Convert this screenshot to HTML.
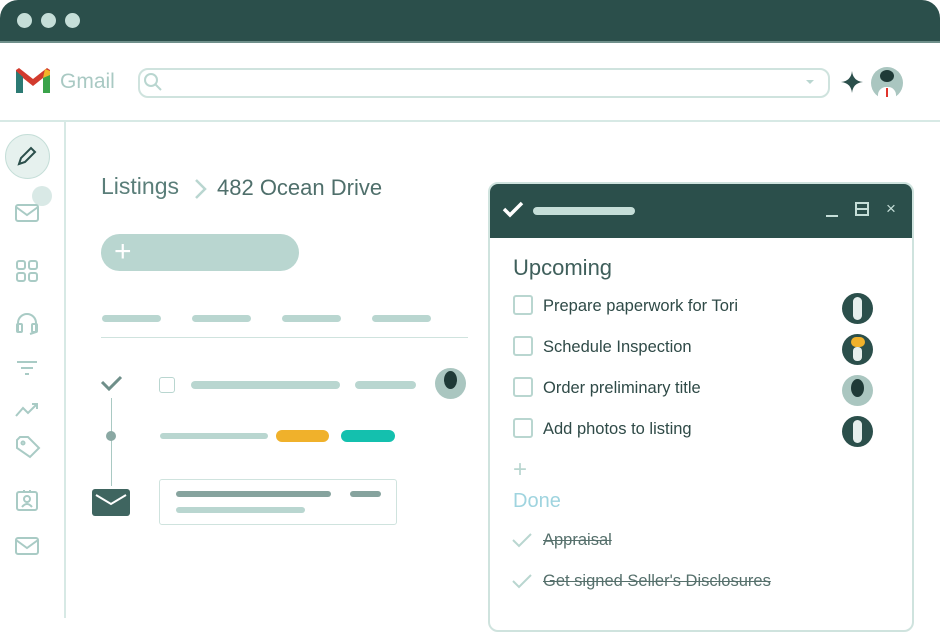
<!DOCTYPE html><html><head><style>
body{margin:0;width:940px;height:618px;background:#fff;position:relative;overflow:hidden;font-family:"Liberation Sans",sans-serif}
.a{position:absolute}
.bar{position:absolute;border-radius:5px;background:#b9d6d0;height:7px}
.cb{display:inline-block;width:20px;height:20px;border:2px solid #b9d6d0;border-radius:3px;box-sizing:border-box;vertical-align:middle;margin-right:10px;position:relative;top:-2px}
</style></head><body>
<div class="a" style="left:0;top:0;width:940px;height:43px;background:#2b4f4b;border-radius:18px 18px 0 0"></div>
<div class="a" style="left:0;top:41px;width:940px;height:2px;background:#6f8f8a"></div>
<div class="a" style="left:17px;top:13px;width:15px;height:15px;border-radius:50%;background:#c5ded8"></div>
<div class="a" style="left:41px;top:13px;width:15px;height:15px;border-radius:50%;background:#c5ded8"></div>
<div class="a" style="left:65px;top:13px;width:15px;height:15px;border-radius:50%;background:#c5ded8"></div>
<svg class="a" style="left:15px;top:67px" width="36" height="28" viewBox="0 0 36 28"><path d="M1 3v23h7V11l10 8 10-8v15h7V3l-3-2-14 11L4 1z" fill="#d23b2e"/><path d="M1 4v22h7V10z" fill="#2c7a73"/><path d="M28 10v16h7V4z" fill="#3aa34a"/><path d="M30 2l5 2v4l-7 3z" fill="#f2b42a"/></svg>
<div class="a" style="left:60px;top:70px;font-size:21px;color:#a9c9c3">Gmail</div>
<div class="a" style="left:138px;top:68px;width:688px;height:26px;border:2px solid #cfe3de;border-radius:10px"></div>
<svg class="a" style="left:142px;top:71px" width="22" height="22"><circle cx="9" cy="9" r="6" fill="none" stroke="#b9d6d0" stroke-width="2"/><path d="M13 13l6 6" stroke="#b9d6d0" stroke-width="2"/></svg>
<div class="a" style="left:806px;top:80px;border:4px solid transparent;border-top:4px solid #b9d6d0"></div>
<svg class="a" style="left:841px;top:71px" width="22" height="22"><path d="M11 0Q12 10 22 11Q12 12 11 22Q10 12 0 11Q10 10 11 0z" fill="#2b4f4b"/></svg>
<div class="a" style="left:871px;top:67px;width:32px;height:32px;border-radius:50%;background:#aac6c0"></div>
<div class="a" style="left:880px;top:70px;width:14px;height:12px;border-radius:50%;background:#1f3a37"></div>
<div class="a" style="left:878px;top:87px;width:18px;height:12px;background:#fff;border-radius:8px 8px 0 0"></div>
<div class="a" style="left:886px;top:88px;width:2px;height:9px;background:#e0342c"></div>
<div class="a" style="left:0;top:120px;width:940px;height:2px;background:#d7e9e5"></div>
<div class="a" style="left:64px;top:122px;width:2px;height:496px;background:#d7e9e5"></div>
<div class="a" style="left:5px;top:134px;width:43px;height:43px;border-radius:50%;background:#e6f1ee;border:1px solid #c5ded8"></div>
<svg class="a" style="left:15px;top:144px" width="24" height="24"><path d="M4 20l2-6L16 4l4 4-10 10z" fill="none" stroke="#2b4f4b" stroke-width="2"/></svg>
<div class="a" style="left:32px;top:186px;width:20px;height:20px;border-radius:50%;background:#d9e9e6"></div>
<svg class="a" style="left:14px;top:200px" width="28" height="380" fill="none" stroke="#a9cbc5" stroke-width="2">
<rect x="2" y="5" width="22" height="16" rx="2"/><path d="M2 7l11 8 11-8"/>
<rect x="3" y="61" width="8" height="8" rx="2"/><rect x="15" y="61" width="8" height="8" rx="2"/><rect x="3" y="73" width="8" height="8" rx="2"/><rect x="15" y="73" width="8" height="8" rx="2"/>
<path d="M4 131v-8a9 9 0 0118 0v8"/><rect x="3" y="124" width="5" height="8" rx="1"/><rect x="18" y="124" width="5" height="8" rx="1"/><path d="M22 132l-6 2"/>
<path d="M3 162h20M7 168h12M11 174h4"/>
<path d="M2 216l7-8 5 5 9-9M18 204h5v5"/>
<path d="M3 248v-8l3-3h8l11 11-9 9z"/><circle cx="9" cy="243" r="1.5"/>
<rect x="3" y="292" width="20" height="18" rx="2"/><circle cx="13" cy="299" r="3"/><path d="M8 307q5-6 10 0M10 290v3M16 290v3"/>
<rect x="2" y="338" width="22" height="16" rx="2"/><path d="M2 340l11 8 11-8"/>
</svg>
<div class="a" style="left:101px;top:173px;font-size:23px;color:#5a7e79">Listings</div>
<svg class="a" style="left:194px;top:178px" width="14" height="22"><path d="M2 2l9 9-9 9" fill="none" stroke="#b9d6d0" stroke-width="2.5"/></svg>
<div class="a" style="left:217px;top:175px;font-size:22px;color:#4f6f6b">482 Ocean Drive</div>
<div class="a" style="left:101px;top:234px;width:198px;height:37px;border-radius:19px;background:#b9d6d0"></div>
<div class="a" style="left:114px;top:237px;font-size:30px;color:#fff;line-height:30px">+</div>
<div class="bar" style="left:102px;top:315px;width:59px"></div><div class="bar" style="left:192px;top:315px;width:59px"></div><div class="bar" style="left:282px;top:315px;width:59px"></div><div class="bar" style="left:372px;top:315px;width:59px"></div>
<div class="a" style="left:101px;top:337px;width:367px;height:1px;background:#cfe3de"></div>
<svg class="a" style="left:100px;top:374px" width="24" height="20"><path d="M2 8l7 7 12-12" fill="none" stroke="#6f8f8a" stroke-width="3"/></svg>
<div class="a" style="left:111px;top:398px;width:1px;height:88px;background:#a9c9c3"></div>
<div class="a" style="left:106px;top:431px;width:10px;height:10px;border-radius:50%;background:#8aa8a3"></div>
<div class="a" style="left:92px;top:489px;width:38px;height:27px;border-radius:3px;background:#3f6560"></div>
<svg class="a" style="left:92px;top:489px" width="38" height="27"><path d="M4 6l15 9 15-9" fill="none" stroke="#fff" stroke-width="2"/></svg>
<div class="a" style="left:159px;top:377px;width:14px;height:14px;border:1.5px solid #b9d6d0;border-radius:3px"></div>
<div class="bar" style="left:191px;top:381px;width:149px;height:8px"></div>
<div class="bar" style="left:355px;top:381px;width:61px;height:8px"></div>
<div class="a" style="left:435px;top:368px;width:31px;height:31px;border-radius:50%;background:#aac6c0"></div>
<div class="a" style="left:444px;top:371px;width:13px;height:18px;border-radius:50%;background:#1f3a37"></div>
<div class="bar" style="left:160px;top:433px;width:108px;height:6px"></div>
<div class="bar" style="left:276px;top:430px;width:53px;height:12px;background:#f0b12b;border-radius:6px"></div>
<div class="bar" style="left:341px;top:430px;width:54px;height:12px;background:#14c0ae;border-radius:6px"></div>
<div class="a" style="left:159px;top:479px;width:236px;height:44px;border:1.5px solid #cfe3de;border-radius:3px"></div>
<div class="bar" style="left:176px;top:491px;width:155px;height:6px;background:#86a39e"></div>
<div class="bar" style="left:350px;top:491px;width:31px;height:6px;background:#86a39e"></div>
<div class="bar" style="left:176px;top:507px;width:129px;height:6px"></div>
<div class="a" style="left:488px;top:182px;width:426px;height:450px;border:2px solid #cfe3de;border-radius:10px;box-sizing:border-box;overflow:hidden">
<div style="height:54px;background:#2b4f4b"></div></div>
<svg class="a" style="left:502px;top:200px" width="22" height="18"><path d="M2 9l6 6 12-12" fill="none" stroke="#fff" stroke-width="3.5"/></svg>
<div class="bar" style="left:533px;top:207px;width:102px;height:8px;background:#c5ded8"></div>
<div class="a" style="left:826px;top:215px;width:12px;height:2px;background:#c5ded8"></div>
<div class="a" style="left:855px;top:202px;width:14px;height:14px;border:2px solid #c5ded8;box-sizing:border-box"></div>
<div class="a" style="left:855px;top:208px;width:14px;height:2px;background:#c5ded8"></div>
<div class="a" style="left:886px;top:199px;font-size:17px;color:#c5ded8">×</div>
<div class="a" style="left:513px;top:255px;font-size:22px;color:#3f5f5b">Upcoming</div>
<div style="position:absolute;left:513px;top:286px;font-size:16.5px;color:#2f4a47;line-height:41px">
<div><span class="cb"></span>Prepare paperwork for Tori</div>
<div><span class="cb"></span>Schedule Inspection</div>
<div><span class="cb"></span>Order preliminary title</div>
<div><span class="cb"></span>Add photos to listing</div>
</div>
<div class="a" style="left:842px;top:293px;width:31px;height:31px;border-radius:50%;background:#2b4f4b"><div style="margin:4px 0 0 11px;width:9px;height:23px;background:#e6efed;border-radius:5px"></div></div>
<div class="a" style="left:842px;top:334px;width:31px;height:31px;border-radius:50%;background:#2b4f4b"><div style="margin:3px 0 0 9px;width:14px;height:10px;background:#f0b12b;border-radius:6px"></div><div style="margin:0 0 0 11px;width:9px;height:14px;background:#e6efed;border-radius:4px"></div></div>
<div class="a" style="left:842px;top:375px;width:31px;height:31px;border-radius:50%;background:#aac6c0"><div style="margin:4px 0 0 9px;width:13px;height:18px;background:#1f3a37;border-radius:50%"></div></div>
<div class="a" style="left:842px;top:416px;width:31px;height:31px;border-radius:50%;background:#2b4f4b"><div style="margin:4px 0 0 11px;width:9px;height:23px;background:#e6efed;border-radius:5px"></div></div>
<div class="a" style="left:513px;top:456px;font-size:24px;color:#b9d6d0;line-height:28px">+</div>
<div class="a" style="left:513px;top:490px;font-size:20px;color:#9fd4df">Done</div>
<svg class="a" style="left:511px;top:530px" width="24" height="60" fill="none" stroke="#b9d6d0" stroke-width="2"><path d="M2 10l6 6 12-12M2 51l6 6 12-12"/></svg>
<div class="a" style="left:543px;top:531px;font-size:16.5px;color:#56706c;text-decoration:line-through">Appraisal</div>
<div class="a" style="left:543px;top:572px;font-size:16.5px;color:#56706c;text-decoration:line-through">Get signed Seller's Disclosures</div>
</body></html>
